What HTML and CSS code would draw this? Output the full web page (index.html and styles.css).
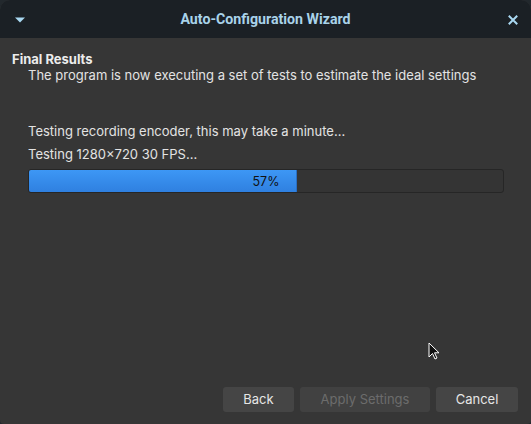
FILE: index.html
```html
<!DOCTYPE html>
<html>
<head>
<meta charset="utf-8">
<link rel="stylesheet" href="styles.css">
</head>
<body>
<div class="window">
  <div class="titlebar">
    <svg class="menu-icon" width="12" height="8" viewBox="0 0 12 8"><polygon points="1,1.5 11,1.5 6,6.5" fill="#a9d8f2"/></svg>
    <div class="title">Auto-Configuration Wizard</div>
    <svg class="close-icon" width="10" height="10" viewBox="0 0 10 10"><path d="M1.5 1.5 L8.5 8.5 M8.5 1.5 L1.5 8.5" stroke="#a9d8f2" stroke-width="2" stroke-linecap="square"/></svg>
  </div>
  <div class="content">
    <div class="heading">Final Results</div>
    <div class="desc">The program is now executing a set of tests to estimate the ideal settings</div>
    <div class="status">
      <div class="line">Testing recording encoder, this may take a minute...</div>
      <div class="line">Testing 1280×720 30 FPS...</div>
      <div class="progress">
        <div class="fill" style="width:56.6%"></div>
        <div class="ptext">57%</div>
      </div>
    </div>
    <div class="spacer"></div>
    <div class="buttons">
      <div class="btn back">Back</div>
      <div class="btn apply disabled">Apply Settings</div>
      <div class="btn cancel">Cancel</div>
    </div>
  </div>
  <svg class="cursor" width="14" height="20" viewBox="0 0 14 20"><path d="M1 1 L1 15 L4.5 11.5 L7 17 L9 16 L6.5 10.8 L11 10.8 Z" fill="#111" stroke="#fff" stroke-width="1"/></svg>
</div>
</body>
</html>
```

FILE: styles.css
```css
html, body {
  margin: 0;
  padding: 0;
  background: #22282d;
}
body {
  width: 531px;
  height: 424px;
  overflow: hidden;
  font-family: Inter, "Noto Sans", sans-serif;
}
.window {
  position: relative;
  width: 531px;
  height: 424px;
  border-radius: 10px 10px 4px 4px;
  overflow: hidden;
  display: flex;
  flex-direction: column;
  background: #363636;
}
.titlebar {
  height: 38px;
  flex: none;
  background: #1b2025;
  display: flex;
  align-items: center;
  padding: 0 13px 0 14px;
}
.menu-icon { flex: none; margin-top: 1px; }
.close-icon { flex: none; margin-top: 1px; }
.title {
  flex: 1;
  text-align: center;
  font-family: Roboto, "Liberation Sans", sans-serif;
  font-weight: bold;
  font-size: 14.2px;
  color: #a9d3ea;
  margin-right: 3px;
}
.content {
  flex: 1;
  display: flex;
  flex-direction: column;
  padding: 13px 13px 12px 12px;
  color: #e3e3e3;
  font-size: 13px;
}
.heading {
  font-weight: bold;
  line-height: 16px;
  color: #ececec;
}
.desc {
  padding-left: 16px;
  line-height: 17px;
}
.status {
  padding-left: 16px;
  margin-top: 39px;
  padding-right: 14px;
}
.line {
  line-height: 17px;
  margin-bottom: 6px;
}
.progress {
  position: relative;
  margin-top: 5px;
  height: 22px;
  border: 1px solid #262626;
  border-radius: 3px;
  background: #343434;
  overflow: hidden;
}
.fill {
  height: 100%;
  background: linear-gradient(#3d97f5, #2f80e0);
  border-right: 1px solid #2a6fc4;
  box-sizing: border-box;
}
.ptext {
  position: absolute;
  inset: 0;
  display: flex;
  align-items: center;
  justify-content: center;
  color: #111;
  font-size: 12.5px;
}
.spacer { flex: 1; }
.buttons {
  display: flex;
  justify-content: flex-end;
  gap: 6px;
}
.btn {
  height: 25px;
  line-height: 25px;
  background: #454545;
  border-radius: 3px;
  text-align: center;
  color: #e6e6e6;
  font-size: 13px;
}
.back { width: 71px; }
.apply { width: 130px; }
.cancel { width: 82px; }
.disabled { color: #6c6c6c; background: #414141; }
.cursor {
  position: absolute;
  left: 428px;
  top: 342px;
}
```
